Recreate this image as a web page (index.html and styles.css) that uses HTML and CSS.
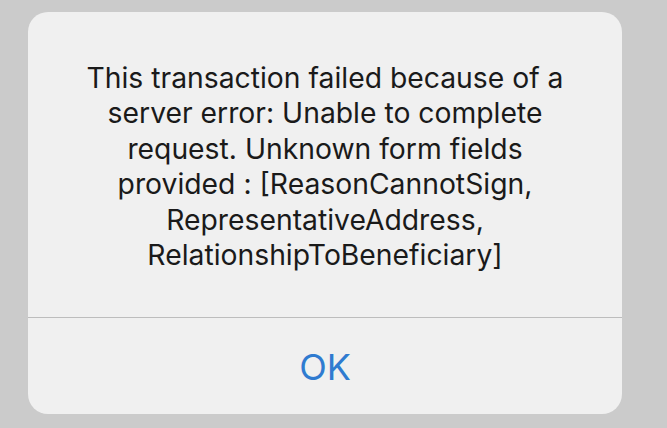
FILE: index.html
```html
<!DOCTYPE html>
<html lang="en">
<head>
<meta charset="utf-8">
<title>Alert</title>
<link rel="stylesheet" href="styles.css">
</head>
<body>
<div class="alert">
  <div class="message">This transaction failed because of a server error: Unable to complete request. Unknown form fields provided : [ReasonCannotSign, RepresentativeAddress, RelationshipToBeneficiary]</div>
  <div class="divider"></div>
  <div class="actions"><span class="ok">OK</span></div>
</div>
</body>
</html>
```

FILE: styles.css
```css
html, body {
  margin: 0;
  padding: 0;
  background: #cbcbcb;
  width: 667px;
  height: 428px;
  overflow: hidden;
}
body {
  padding: 12px 45px 0 28px;
  box-sizing: border-box;
  font-family: Inter, "Noto Sans", sans-serif;
}
.alert {
  width: 594px;
  height: 402px;
  background: #f0f0f0;
  border-radius: 20px;
  display: flex;
  flex-direction: column;
}
.message {
  height: 305px;
  box-sizing: border-box;
  padding: 49px 44px 0;
  text-align: center;
  font-size: 28.3px;
  line-height: 35.4px;
  color: #1a1a1a;
}
.divider {
  height: 1px;
  background: #bdbdbd;
}
.actions {
  flex: 1;
  display: flex;
  align-items: center;
  justify-content: center;
}
.ok {
  font-size: 36px;
  color: #2f7bd0;
  line-height: 1;
  margin-top: 2px;
}
```
